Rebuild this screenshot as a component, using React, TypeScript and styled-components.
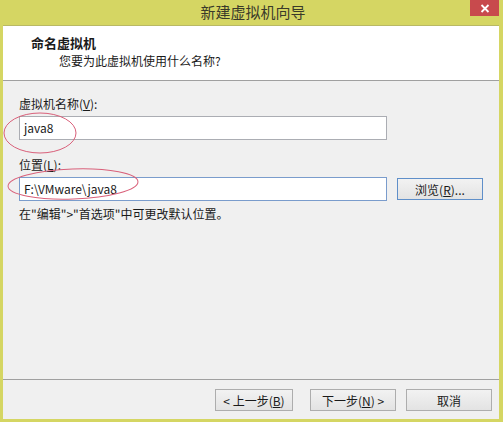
import React from "react";
import styled, { createGlobalStyle } from "styled-components";

const GlobalStyle = createGlobalStyle`
  html, body {
    margin: 0;
    padding: 0;
    background: #d5d663;
  }
  body {
    font-family: "Noto Sans CJK SC", "Liberation Sans", sans-serif;
    font-size: 12px;
    color: #1a1a1a;
  }
`;

const Window = styled.div`
  position: relative;
  width: 503px;
  height: 422px;
  box-sizing: border-box;
  background: #d5d663;
  padding: 0 4px 3px 3px;
  display: flex;
  flex-direction: column;
`;

const TitleBar = styled.div`
  height: 25px;
  display: flex;
  align-items: flex-start;
  justify-content: center;
  position: relative;
  flex-shrink: 0;
`;

const Title = styled.div`
  font-size: 15px;
  line-height: 24px;
  color: #3a3a2a;
  margin-left: 4px;
`;

const CloseButton = styled.div`
  position: absolute;
  right: 0;
  top: 0;
  width: 29px;
  height: 16px;
  background: #c84a4d;
  display: flex;
  align-items: center;
  justify-content: center;
`;

const Client = styled.div`
  flex: 1;
  display: flex;
  flex-direction: column;
  background: #f0f0f0;
  border-top: 1px solid #b9b964;
`;

const Header = styled.div`
  height: 55px;
  background: #ffffff;
  border-bottom: 1px solid #a0a0a0;
  padding: 8px 0 0 28px;
  box-sizing: border-box;
  flex-shrink: 0;
`;

const HeaderTitle = styled.div`
  font-weight: bold;
  font-size: 13px;
  line-height: 18px;
`;

const HeaderSub = styled.div`
  font-size: 12px;
  line-height: 18px;
  padding-left: 28px;
`;

const Body = styled.div`
  flex: 1;
  padding: 14px 0 0 16px;
  display: flex;
  flex-direction: column;
`;

const Label = styled.div`
  font-size: 12px;
  line-height: 18px;
  margin-bottom: 3px;
  u { text-decoration: underline; }
`;

const Row = styled.div`
  display: flex;
  align-items: center;
  gap: 10px;
`;

const Field = styled.div<{ $focused?: boolean }>`
  width: 368px;
  height: 24px;
  box-sizing: border-box;
  background: #fff;
  border: 1px solid ${(p) => (p.$focused ? "#7a9ccc" : "#abadb3")};
  padding: 0 4px;
  font-size: 12px;
  line-height: 22px;
  font-family: "Noto Sans CJK SC", "Liberation Sans", sans-serif;
`;

const Spacer = styled.div<{ $h: number }>`
  height: ${(p) => p.$h}px;
`;

const Hint = styled.div`
  font-size: 12px;
  line-height: 18px;
  margin-top: 4px;
`;

const Footer = styled.div`
  height: 40px;
  border-top: 1px solid #a0a0a0;
  display: flex;
  align-items: flex-start;
  justify-content: flex-end;
  padding: 9px 7px 0 0;
  box-sizing: border-box;
  flex-shrink: 0;
`;

const Button = styled.div<{ $w: number; $gap?: number; $focus?: boolean }>`
  width: ${(p) => p.$w}px;
  height: 22px;
  box-sizing: border-box;
  margin-left: ${(p) => p.$gap ?? 0}px;
  border: 1px solid ${(p) => (p.$focus ? "#5f8fc9" : "#adadad")};
  background: linear-gradient(#f2f2f2, #e3e3e3);
  display: flex;
  align-items: center;
  justify-content: center;
  font-size: 12px;
  color: #1a1a1a;
  white-space: nowrap;
  u { text-decoration: underline; }
`;

const Overlay = styled.svg`
  position: absolute;
  left: 0;
  top: 0;
  pointer-events: none;
`;

export default function App() {
  return (
    <>
      <GlobalStyle />
      <Window>
        <TitleBar>
          <Title>新建虚拟机向导</Title>
          <CloseButton>
            <svg width="10" height="9" viewBox="0 0 10 9">
              <path d="M1.5 1 L8.5 8 M8.5 1 L1.5 8" stroke="#fff" strokeWidth="1.8" />
            </svg>
          </CloseButton>
        </TitleBar>
        <Client>
          <Header>
            <HeaderTitle>命名虚拟机</HeaderTitle>
            <HeaderSub>您要为此虚拟机使用什么名称?</HeaderSub>
          </Header>
          <Body>
            <Label>
              虚拟机名称(<u>V</u>):
            </Label>
            <Row>
              <Field>java8</Field>
            </Row>
            <Spacer $h={16} />
            <Label>
              位置(<u>L</u>):
            </Label>
            <Row>
              <Field $focused>F:\VMware\java8</Field>
              <Button $w={86} $focus>
                浏览(<u>R</u>)...
              </Button>
            </Row>
            <Hint>在"编辑"&gt;"首选项"中可更改默认位置。</Hint>
          </Body>
          <Footer>
            <Button $w={78}>
              &lt; 上一步(<u>B</u>)
            </Button>
            <Button $w={86} $gap={17}>
              下一步(<u>N</u>) &gt;
            </Button>
            <Button $w={86} $gap={10}>
              取消
            </Button>
          </Footer>
        </Client>
        <Overlay width="503" height="422" viewBox="0 0 503 422">
          <ellipse cx="40" cy="133" rx="36" ry="20" fill="none" stroke="#d9607a" strokeWidth="1" />
          <ellipse
            cx="73"
            cy="184"
            rx="65"
            ry="15"
            fill="none"
            stroke="#d9607a"
            strokeWidth="1"
            transform="rotate(-2 73 184)"
          />
        </Overlay>
      </Window>
    </>
  );
}
